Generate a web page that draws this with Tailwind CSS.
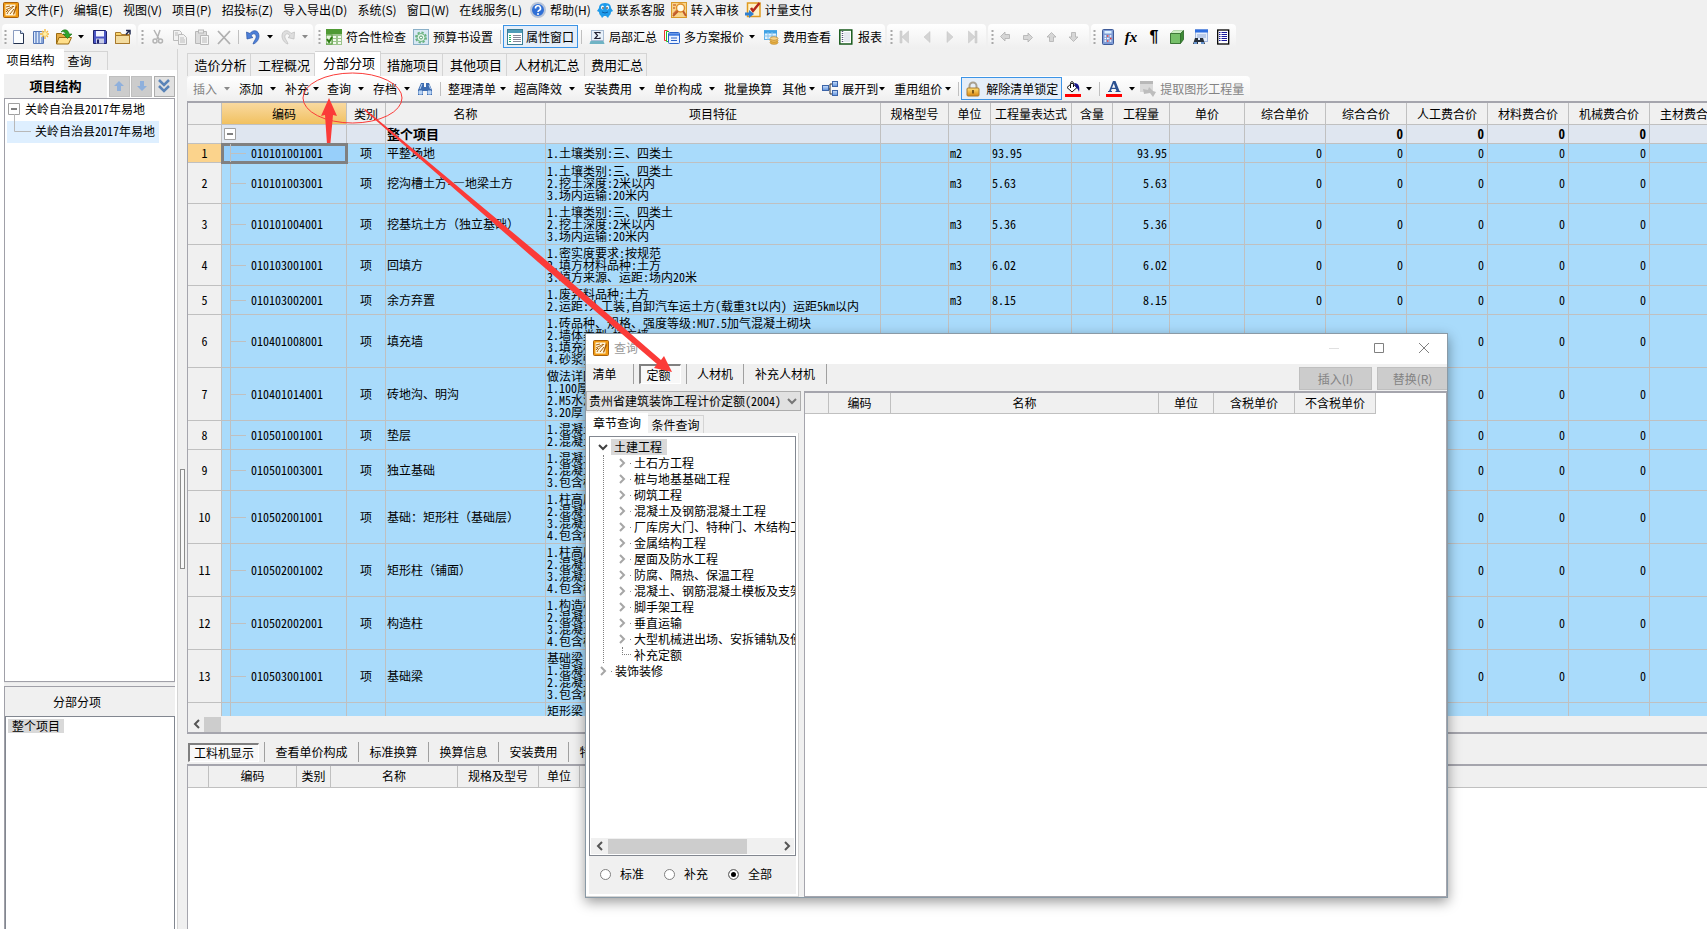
<!DOCTYPE html>
<html lang="zh-CN">
<head>
<meta charset="utf-8">
<title>计价软件 - 分部分项</title>
<script src="https://cdn.jsdelivr.net/npm/@tailwindcss/browser@4"></script>
</head>
<body class="relative h-screen overflow-hidden flex flex-col bg-[#f0f0f0] text-black text-[12px] leading-[16px] whitespace-nowrap font-['Noto_Sans_Mono_CJK_SC','Noto_Sans_CJK_SC',sans-serif]">

<svg class="absolute w-0 h-0" aria-hidden="true">
  <defs>
    <linearGradient id="gold" x1="0" y1="0" x2="0" y2="1"><stop offset="0" stop-color="#ffe27a"/><stop offset="1" stop-color="#d9840c"/></linearGradient>
    <linearGradient id="blu" x1="0" y1="0" x2="0" y2="1"><stop offset="0" stop-color="#cfe2fb"/><stop offset="1" stop-color="#5b8fdc"/></linearGradient>
    <symbol id="app" viewBox="0 0 16 16"><rect x=".5" y=".5" width="15" height="15" rx="1" fill="#f09a12" stroke="#a9600a"/><rect x="2.500" y="2.500" width="10" height="11" fill="#fff6dc"/><path d="M3 5l4-1M3 8c3-2 5-2 7-4M4 12c2-5 5-5 7-8M7 12l4-5M3 10l2-2" stroke="#a9600a" fill="none"/><path d="M13 3l-3 9 1 1 3-8z" fill="#a9600a"/></symbol>
    <symbol id="help" viewBox="0 0 16 16"><circle cx="8" cy="8" r="7" fill="#2f6fd6" stroke="#b8c4d8" stroke-width="2"/><path d="M5.500 6.500a2.500 2.500 0 1 1 3.500 2c-.8.4-1 .8-1 1.500" fill="none" stroke="#fff" stroke-width="1.600"/><circle cx="8" cy="12" r="1" fill="#fff"/></symbol>
    <symbol id="qq" viewBox="0 0 16 16"><path d="M8 1C3 1 2 4 2 6L0 9l2 1c0 2 1 3 2 4l1 2 2-2h2l2 2 1-2c1-1 2-2 2-4l2-1-2-3c0-2-1-5-6-5z" fill="#1f9bea"/><ellipse cx="5.500" cy="5.500" rx="1.500" ry="2" fill="#fff"/><ellipse cx="10.500" cy="5.500" rx="1.500" ry="2" fill="#fff"/><circle cx="6" cy="6" r=".8"/><circle cx="10" cy="6" r=".8"/><path d="M5 10q3 2 6 0" stroke="#0b5fa8" fill="none"/></symbol>
    <symbol id="audit" viewBox="0 0 16 16"><rect x=".5" y=".5" width="15" height="15" fill="#f9d488" stroke="#d99a2a"/><path d="M2 3h3M2 6h2M2 12l4-4" stroke="#d2733a" stroke-width="1.300"/><circle cx="9.500" cy="6" r="4" fill="#fffbe8" stroke="#e0902c" stroke-width="1.500"/><path d="M7 9l-5 5" stroke="#c05a2a" stroke-width="2"/><path d="M12 9l3 5" stroke="#c05a2a" stroke-width="2"/></symbol>
    <symbol id="pay" viewBox="0 0 16 16"><rect x="2.500" y="1" width="12.500" height="13.500" fill="#fff2c8" stroke="#e09a20" stroke-width="1.500"/><path d="M14.500 1L8 9 6 6" stroke="#b3281c" stroke-width="2.500" fill="none"/><path d="M0 10.500h4V8l5 4-5 4v-2.500H0z" fill="#2f7fd0"/></symbol>
    <symbol id="new" viewBox="0 0 16 16"><path d="M3.500 1.500h7l3 3v10h-10z" fill="#fbfdff" stroke="#8a9cc0"/><path d="M10.500 1.500v3h3" fill="#c5d6f0" stroke="#4a5a78"/><path d="M13.500 4.500v10h-10" stroke="#22304c" fill="none"/></symbol>
    <symbol id="newp" viewBox="0 0 16 16"><path d="M.5 2.500h10v12H.5z" fill="#dce9fb" stroke="#5577b8"/><path d="M3 3v11M6 3v11M9 8v6" stroke="#6f90cc" stroke-width="1.500"/><path d="M12 0v10M7 5h9M9 2l6 6M15 2L9 8" stroke="#f3b73a" stroke-width="1.300"/><circle cx="12" cy="5" r="2" fill="#fff0a8"/></symbol>
    <symbol id="open" viewBox="0 0 16 16"><path d="M.5 4.500h5l1 1h6v9H.5z" fill="#e5ab45" stroke="#9a6a10"/><path d="M3 8.500h12.500l-3 6.500H.5z" fill="#ffdf8a" stroke="#9a6a10"/><path d="M5 3c3-4 8-2 8 2h3l-4.500 4.500L7 5h3c-1-2-3-3-5-2z" fill="#2fa52c" stroke="#176b16" stroke-width=".6"/></symbol>
    <symbol id="save" viewBox="0 0 16 16"><path d="M1.500 1.500h12l1 1v12h-13z" fill="#4a55c4" stroke="#20246c"/><rect x="4" y="2" width="8" height="5.500" fill="#f3f5ff"/><rect x="4" y="9.500" width="8" height="5" fill="#c8cde8"/><rect x="5" y="10.500" width="2" height="4" fill="#20246c"/></symbol>
    <symbol id="folder" viewBox="0 0 16 16"><path d="M.5 3.500h5l1 2h8v9H.5z" fill="url(#gold)" stroke="#a8792c"/><path d="M.5 6.500h14v8H.5z" fill="#f3dca0" stroke="#a8792c"/><path d="M11 5.500l3.500-4M11 1.500h4v4" stroke="#222b50" stroke-width="1.500" fill="none"/></symbol>
    <symbol id="cut" viewBox="0 0 16 16" fill="none" stroke="#b4b4b4" stroke-width="1.500"><path d="M4 1l5 9M10 1L7 10"/><circle cx="5" cy="12" r="2"/><circle cx="10.500" cy="12" r="2"/></symbol>
    <symbol id="copy" viewBox="0 0 16 16" fill="#f2f2f2" stroke="#bcbcbc"><path d="M1.500 1.500h6l2 2v8h-8z"/><path d="M6.500 5.500h5l3 3v7h-8z"/><path d="M8 9h4M8 11h5M8 13h5M3 4h3M3 6h3"/></symbol>
    <symbol id="paste" viewBox="0 0 16 16" fill="#dcdcdc" stroke="#b8b8b8"><path d="M1.500 2.500h11v12h-11z"/><rect x="4.500" y="1" width="5" height="3" fill="#eee"/><path d="M6.500 6.500h8v9h-8z" fill="#f6f6f6"/><path d="M8 9h5M8 11h5M8 13h5"/></symbol>
    <symbol id="del" viewBox="0 0 16 16"><path d="M2 2l12 13M14 2L2 15" stroke="#b0b0b0" stroke-width="1.800"/></symbol>
    <symbol id="undo" viewBox="0 0 16 16"><path d="M1.500 3l.5 7 6-1.500-2-1.500c2-4 6-2 5 2-1 2-2 3-3 6 4-1 6-5 6-8 0-6-6-7-9-2.500z" fill="#4d7fd8" stroke="#2a56a8" stroke-width=".7"/></symbol>
    <symbol id="redo" viewBox="0 0 16 16"><path d="M14.500 3l-.5 7-6-1.500 2-1.500c-2-4-6-2-5 2 1 2 2 3 3 6-4-1-6-5-6-8 0-6 6-7 9-2.500z" fill="#dedede" stroke="#c0c0c0" stroke-width=".8"/></symbol>
    <symbol id="check" viewBox="0 0 16 16"><rect width="16" height="16" fill="#9cc48c"/><rect width="16" height="5" fill="#4f9a34"/><path d="M7 7h3v2H7zM12 7h3v2h-3zM7 10h3v2H7zM12 10h3v2h-3zM7 13h3v2H7zM12 13h3v2h-3z" fill="#f4faef"/><rect y="6" width="6" height="9" fill="#e6f4de" stroke="#4f9a34"/><path d="M1 10l2 3 3-5" stroke="#2d7a14" stroke-width="2" fill="none"/></symbol>
    <symbol id="gear" viewBox="0 0 16 16"><rect x=".5" y=".5" width="15" height="15" fill="#d8e8f4" stroke="#8ab0c8"/><circle cx="8" cy="8.500" r="5" fill="none" stroke="#69b380" stroke-width="2" stroke-dasharray="2.200 1.700"/><circle cx="8" cy="8.500" r="4" fill="#e5f5ea" stroke="#69b380"/><circle cx="8" cy="8.500" r="1.500" fill="#fff" stroke="#4c9a66"/></symbol>
    <symbol id="props" viewBox="0 0 16 16"><rect x=".5" y=".5" width="15" height="15" fill="#fff" stroke="#3a7d95"/><rect x="1" y="1" width="14" height="3" fill="#4f9db8"/><path d="M2 6.500h2M2 8.500h2M2 10.500h2M2 12.500h2" stroke="#2b6"/><path d="M6 6.500h8M6 8.500h8M6 10.500h8M6 12.500h8" stroke="#889"/></symbol>
    <symbol id="sum" viewBox="0 0 16 16"><rect x="2.500" y="1.500" width="12" height="10" fill="#e8f1fa" stroke="#a8bcd4"/><path d="M11 4.500V3.500H6l2.500 3L6 9.500h5v-1" fill="none" stroke="#223" stroke-width="1.200"/><path d="M1.500 12h13l1 3H.5z" fill="#6fb3c4"/></symbol>
    <symbol id="plans" viewBox="0 0 16 16"><path d="M3.500 1.500h-3v10h3" fill="#fff" stroke="#e33"/><path d="M5 2.500H2.500v10H5" fill="#fff" stroke="#2b2"/><rect x="4.500" y="3.500" width="11" height="11" rx="1" fill="#eaf2ff" stroke="#2b63c8"/><path d="M5 5.500h10" stroke="#3f7be0" stroke-width="2.500"/><path d="M7 9h6M7 11.500h6" stroke="#2b63c8"/></symbol>
    <symbol id="fee" viewBox="0 0 16 16"><rect x="1.500" y="1.500" width="12" height="9" fill="#e2f2fd" stroke="#62b0e6"/><path d="M1 3h13" stroke="#3fa2e6" stroke-width="3"/><path d="M1 7h13M5 3v8M9 3v8" stroke="#84c2ee"/><ellipse cx="11" cy="13.500" rx="4" ry="1.800" fill="#f0b745" stroke="#b8842a" stroke-width=".7"/><ellipse cx="11" cy="11.500" rx="4" ry="1.800" fill="#f4c05a" stroke="#b8842a" stroke-width=".7"/><ellipse cx="11" cy="9.500" rx="4" ry="1.800" fill="#f8d48a" stroke="#b8842a" stroke-width=".7"/></symbol>
    <symbol id="report" viewBox="0 0 16 16"><rect x="1.800" y="1" width="12" height="14" fill="#fff" stroke="#175a1b" stroke-width="1.500"/><path d="M4.500 2v12" stroke="#557" stroke-width="1.500" stroke-dasharray="1 1"/><path d="M6 4h6M6 6h6M6 8h6M6 10h6M6 12h6" stroke="#ccd4e0"/></symbol>
    <symbol id="first" viewBox="0 0 16 16" fill="#d4d4d4" stroke="#c2c2c2" stroke-width=".5"><path d="M4 2h2v12H4zM12.500 2v12L6 8z"/></symbol>
    <symbol id="prev" viewBox="0 0 16 16" fill="#d4d4d4" stroke="#c2c2c2" stroke-width=".5"><path d="M11 2.500v11L5 8z"/></symbol>
    <symbol id="next" viewBox="0 0 16 16" fill="#d4d4d4" stroke="#c2c2c2" stroke-width=".5"><path d="M5 2.500v11L11 8z"/></symbol>
    <symbol id="last" viewBox="0 0 16 16" fill="#d4d4d4" stroke="#c2c2c2" stroke-width=".5"><path d="M10 2h2v12h-2zM3.500 2v12L10 8z"/></symbol>
    <symbol id="al" viewBox="0 0 16 16"><path d="M3.500 7.500L8 3v2.500h4.500v4H8V12z" fill="#d6d6d6" stroke="#b0b0b0" stroke-width=".8"/></symbol>
    <symbol id="calc" viewBox="0 0 16 16"><rect x="2.500" y=".5" width="11" height="15" rx="1" fill="#7f9cd6" stroke="#3d5a98"/><rect x="4.500" y="2" width="7" height="2.500" fill="#dcf0ff"/><path d="M4.500 7h7M4.500 9.500h7M4.500 12h7" stroke="#fff" stroke-width="1.500" stroke-dasharray="1.600 1"/><path d="M7 7h1.500M10 9.500h1.500M7 12h1.500" stroke="#d33" stroke-width="1.500"/></symbol>
    <symbol id="cube" viewBox="0 0 16 16"><path d="M1.500 4.500l3-3h10v9l-3 4h-10z" fill="#3d8a34"/><path d="M1.500 4.500h10v10h-10z" fill="#76c069"/><path d="M1.500 4.500l3-3h10l-3 3z" fill="#cdeec4"/><path d="M1.500 4.500h10v10h-10zM11.500 4.500l3-3v9l-3 4" fill="none" stroke="#2a6424" stroke-width=".8"/></symbol>
    <symbol id="findw" viewBox="0 0 16 16"><rect x="3.500" y=".5" width="12" height="12" fill="#e5eefb" stroke="#a3b8e0"/><path d="M3 2h13" stroke="#2f6fe0" stroke-width="3"/><path d="M5 6h9M5 8h9" stroke="#8fa9d8"/><path d="M1 15l2-6h3v2h2V9h3l2 6H9v-2H6v2z" fill="#27303c"/><path d="M2 14h3M9 14h3" stroke="#7db5ff" stroke-width="1.500"/></symbol>
    <symbol id="list" viewBox="0 0 16 16"><rect x="2.700" y="1" width="11" height="14" fill="#fff" stroke="#000" stroke-width="1.300"/><path d="M4 3.500h1.500M4 5.500h1.500M4 7.500h1.500M4 9.500h1.500M4 11.500h1.500M6.500 3.500H12M6.500 5.500H12M6.500 7.500H12M6.500 9.500H12M6.500 11.500H12" stroke="#1a1a9c"/></symbol>
    <symbol id="bino" viewBox="0 0 16 16"><path d="M1 9l3-7h3v4h2V2h3l3 7v5h-5v-4H6v4H1z" fill="#3d6cb0"/><path d="M2 10h3v3H2zM11 10h3v3h-3zM5 3l-2 5M12 4l1.500 4" fill="#b9d4f5" stroke="#b9d4f5"/></symbol>
    <symbol id="nodes" viewBox="0 0 16 16"><path d="M5 8h3M8 3v10h3M8 3h3" stroke="#333" fill="none"/><rect x=".5" y="4.500" width="6" height="5" fill="url(#blu)" stroke="#3c64a8"/><rect x="10.500" y=".5" width="5" height="5" fill="url(#blu)" stroke="#3c64a8"/><rect x="10.500" y="9.500" width="5" height="5" fill="url(#blu)" stroke="#3c64a8"/></symbol>
    <symbol id="lock" viewBox="0 0 16 16"><path d="M4.500 8V5a3.500 3.500 0 0 1 7 0v3" fill="none" stroke="#a8a090" stroke-width="2"/><rect x="2" y="7" width="12" height="8" rx="1" fill="url(#gold)" stroke="#a87a30"/><path d="M8 9v3.500" stroke="#5a3a08" stroke-width="1.500"/></symbol>
    <symbol id="fill" viewBox="0 0 16 16"><path d="M2 6.500l5-4.500 5 4.500-5 4.500z" fill="#fff" stroke="#111"/><path d="M5.500 7V2.500C5.500 0 8.500 0 8.500 2.500V6" stroke="#111" fill="none"/><path d="M9 2c5 0 6 4 5 9-1-3-2-4-3-4.500z" fill="#15158a"/><rect y="13" width="16" height="3" fill="#f00"/></symbol>
    <symbol id="fontc" viewBox="0 0 16 16"><path d="M7 0h2.500l4 10h1v1H9.500v-1h1L9.700 8H5.600L5 10h1v1H2v-1h1zM7.800 2.500L6 6.800h3.300z" fill="#2b5090"/><rect y="13" width="16" height="3" fill="#f00"/></symbol>
    <symbol id="extract" viewBox="0 0 16 16"><rect width="13" height="11" fill="#dadada"/><rect width="13" height="3" fill="#b8b8b8"/><path d="M3 8l5 1 1-3 4 4 3 1-3 5-3-4-6 1z" fill="#bdbdbd"/></symbol>
    <symbol id="chev" viewBox="0 0 10 10"><path d="M3 1l4 4-4 4" fill="none" stroke="currentColor" stroke-width="2"/></symbol>
  </defs>
</svg>

<!-- menu bar -->
<nav class="h-6 pb-1 pl-[3px] flex items-center shrink-0">
  <svg class="size-4 mr-[6px]"><use href="#app"/></svg>
  <div id="menu" class="flex items-center gap-[10px]"></div>
  <div id="links" class="flex items-center gap-[6px] ml-2"></div>
</nav>

<!-- main toolbar -->
<div id="bar1" class="flex shrink-0 gap-[2px] pl-[2px] h-[25px]"></div>

<div class="flex flex-1 min-h-0">
  <!-- left column -->
  <aside class="w-[178px] shrink-0 flex flex-col border-r border-[#d4d4d4]">
    <div class="flex items-end h-[21px]">
      <button class="bg-white h-[21px] w-16 pr-[3px] text-center">项目结构</button>
      <button class="h-[19px] w-11 pr-3 border-t border-r border-[#d4d4d4]">查询</button>
    </div>
    <div class="bg-white flex-1 flex flex-col min-h-0 pl-1 pr-[2px] pt-1">
      <div class="flex items-center justify-between h-6 shrink-0 bg-white">
        <h2 class="bg-[#f0f0f0] w-[103px] h-6 leading-6 text-[13px] font-bold text-center">项目结构</h2>
        <button aria-label="上移" class="size-[21px] bg-[#cccccc] border border-[#bfbfbf] flex items-center justify-center"><svg class="w-3 h-3" viewBox="0 0 12 12"><path d="M6 1l5 5H8v5H4V6H1z" fill="#8fb0dc"/></svg></button>
        <button aria-label="下移" class="size-[21px] bg-[#cccccc] border border-[#bfbfbf] flex items-center justify-center"><svg class="w-3 h-3" viewBox="0 0 12 12"><path d="M6 11l5-5H8V1H4v5H1z" fill="#8fb0dc"/></svg></button>
        <button aria-label="展开" class="size-[21px] bg-[#e1e1e1] border border-[#adadad] flex items-center justify-center"><svg class="size-4" viewBox="0 0 16 16"><path d="M3 2l5 5 5-5M3 8l5 5 5-5" fill="none" stroke="#5a84b8" stroke-width="2.500"/></svg></button>
      </div>
      <div class="flex-1 border border-[#a0a0a8] pl-[2px]">
        <div class="flex items-center h-[20px] pl-[1px]"><svg class="size-3 mr-[5px]" viewBox="0 0 12 12"><path d="M.5 .5h11v11H.5z" fill="#fff" stroke="#a0a0a0"/><path d="M3 6h6" stroke="#000"/></svg>关岭自治县2017年易地</div>
        <div class="flex items-center h-[22px] mt-[2px] pb-[2px] w-[152px] bg-[#deefff]"><svg class="w-[28px] h-[22px] overflow-visible" viewBox="0 0 28 22"><path d="M7.500 -6V11.500H24" fill="none" stroke="#b8b8b8"/></svg>关岭自治县2017年易地</div>
      </div>
      <div class="h-1 shrink-0 bg-[#f0f0f0] border-t border-[#e8e8e8]"></div>
      <div class="h-[243px] shrink-0 border-l border-t border-[#a0a0a8] bg-[#f0f0f0] flex flex-col">
        <h2 class="h-[29px] leading-[30px] pl-12 font-normal">分部分项</h2>
        <div class="bg-white flex-1 border-x border-t border-[#828790] pt-[1px] pl-[2px]"><span class="inline-block bg-[#d9d9d9] h-[14px] leading-[14px] px-1">整个项目</span></div>
      </div>
    </div>
  </aside>
  <div class="w-2 shrink-0 flex items-center pl-[2px]"><div class="w-[5px] h-[100px] mt-[60px] border border-[#8c8c8c] bg-[#f8f8f8]"></div></div>

  <!-- right column -->
  <main class="flex-1 min-w-0 flex flex-col pt-[2px] pl-[1px]">
    <div id="tabs" class="flex items-end h-[25px] shrink-0 text-[13px]"></div>
    <div id="bar2" class="flex items-center h-[25px] w-[1063px] shrink-0 pl-[6px] rounded bg-linear-to-b from-white to-[#efefef]"></div>
    <section class="h-[633px] shrink-0 border-l border-t-2 border-b-2 border-[#a5a5ad] flex flex-col">
      <div class="h-[613px] overflow-hidden bg-white">
        <table class="table-fixed border-separate border-spacing-0 w-[1543px]">
          <colgroup><col class="w-[34px]"><col class="w-[125px]"><col class="w-[39px]"><col class="w-[160px]"><col class="w-[335px]"><col class="w-[68px]"><col class="w-[42px]"><col class="w-[81px]"><col class="w-[41px]"><col class="w-[57px]"><col class="w-[75px]"><col class="w-[81px]"><col class="w-[81px]"><col class="w-[81px]"><col class="w-[81px]"><col class="w-[81px]"><col class="w-[81px]"></colgroup>
          <thead><tr id="head" class="h-[22px]"></tr></thead>
          <tbody id="rows"></tbody>
        </table>
      </div>
      <div class="h-4 flex items-center bg-[#f0f0f0] pl-1">
        <svg class="size-[10px] mr-[2px] text-[#555] rotate-180"><use href="#chev"/></svg>
        <div class="w-[17px] h-[15px] bg-[#cdcdcd]"></div>
      </div>
    </section>
    <div class="flex items-center h-[30px] shrink-0 pt-[6px] pl-[1px]">
      <button class="h-[19px] w-[71px] border-t-2 border-l-2 border-r border-b border-t-[#808080] border-l-[#808080] border-[#fff] bg-[#f8f8f8]">工料机显示</button>
      <div id="subtabs" class="flex ml-[5px]"></div>
    </div>
    <section class="flex-1 bg-white border-l border-t-2 border-[#a5a5ad]">
      <div id="subhead" class="flex h-[22px] bg-[#f0f0f0] border-b border-[#c0c0c0] text-center leading-[20px]"></div>
    </section>
  </main>
</div>

<!-- query dialog -->
<section role="dialog" aria-label="查询" class="absolute left-[585px] top-[333px] w-[863px] h-[565px] bg-[#f0f0f0] border border-[#8a9aa6] shadow-[0_4px_12px_rgba(0,0,0,0.4)] flex flex-col">
  <header class="h-[30px] shrink-0 bg-white flex items-center pl-[7px] pr-[17px] pb-[2px] text-[#999]">
    <svg class="size-4 mr-[5px]"><use href="#app"/></svg>查询
    <div class="ml-auto flex gap-[33px]">
      <button aria-label="最小化"><svg class="size-3" viewBox="0 0 12 12"><path d="M1 6.500h10" stroke="#e0e0e0"/></svg></button>
      <button aria-label="最大化"><svg class="size-3" viewBox="0 0 12 12"><path d="M1.500 1.500h9v9h-9z" fill="none" stroke="#808080"/></svg></button>
      <button aria-label="关闭"><svg class="size-3" viewBox="0 0 12 12"><path d="M1 1l10 10M11 1L1 11" stroke="#808080"/></svg></button>
    </div>
  </header>
  <div class="h-[27px] shrink-0 flex">
    <div class="flex h-5 text-center">
      <button class="w-12 pr-[14px] pl-[4px] border-r border-[#a0a0a0]">清单</button>
      <button class="w-[42px] h-5 mx-[5px] pr-[4px] border-t-2 border-l-2 border-r border-b border-t-[#808080] border-l-[#808080] border-white bg-[#f8f8f8]">定额</button>
      <button class="w-[58px] border-x border-[#a0a0a0]">人材机</button>
      <button class="w-[83px] border-r border-[#a0a0a0]">补充人材机</button>
    </div>
    <div class="ml-auto flex gap-[5px] pt-[3px] text-[#838383]">
      <button class="w-[73px] h-[23px] bg-[#cccccc] border border-[#bfbfbf] font-['Noto_Sans_CJK_SC',sans-serif]">插入(I)</button>
      <button class="w-[70px] h-[23px] bg-[#cccccc] border border-r-0 border-[#bfbfbf] font-['Noto_Sans_CJK_SC',sans-serif]">替换(R)</button>
    </div>
  </div>
  <div class="flex flex-1 min-h-0">
    <div class="w-[215px] shrink-0 flex flex-col">
      <div class="relative h-5 shrink-0">
        <select aria-label="定额库" class="appearance-none w-full h-5 pl-[2px] bg-[#e1e1e1] border border-[#adadad] rounded-none leading-[16px]"><option>贵州省建筑装饰工程计价定额(2004)</option></select>
        <svg class="size-[10px] absolute right-1 top-[5px] text-[#777] rotate-90 pointer-events-none"><use href="#chev"/></svg>
      </div>
      <div class="flex items-end h-[22px] shrink-0">
        <button class="bg-white h-5 w-[62px]">章节查询</button>
        <button class="w-14 h-[18px] border-t border-r border-[#d4d4d4]">条件查询</button>
      </div>
      <div class="flex-1 min-h-0 bg-white border-r border-b border-[#d4d4d4] w-[213px] pl-[3px] pr-[2px] pt-[3px] pb-[2px] flex flex-col">
        <div class="flex-1 min-h-0 border border-[#828790] flex flex-col overflow-hidden">
          <ul id="tree" class="flex-1 pt-[2px] overflow-hidden"></ul>
          <div class="h-4 shrink-0 mx-[1px] mb-[1px] pl-1 pr-[2px] bg-[#f0f0f0] flex items-center">
            <svg class="size-[10px] text-[#555] rotate-180 mr-[3px]"><use href="#chev"/></svg>
            <div class="w-[139px] h-[15px] bg-[#cdcdcd]"></div>
            <svg class="size-[10px] text-[#555] ml-auto"><use href="#chev"/></svg>
          </div>
        </div>
        <div class="h-[38px] shrink-0 bg-[#f0f0f0] flex items-center pl-[11px] pb-[2px] gap-5">
          <label class="flex items-center gap-[9px]"><input type="radio" name="scope" class="appearance-none size-[11px] rounded-full border border-[#808080] bg-white">标准</label>
          <label class="flex items-center gap-[9px]"><input type="radio" name="scope" class="appearance-none size-[11px] rounded-full border border-[#808080] bg-white">补充</label>
          <label class="flex items-center gap-[9px]"><input type="radio" name="scope" checked class="appearance-none size-[11px] rounded-full border border-[#808080] bg-white checked:bg-black checked:shadow-[inset_0_0_0_2px_#fff]">全部</label>
        </div>
      </div>
    </div>
    <div class="flex-1 ml-[3px] bg-white border-l border-t-2 border-b border-r border-[#a5a5ad]">
      <div id="dhead" class="flex h-[21px] text-center leading-[20px]"></div>
    </div>
  </div>
</section>

<!-- red callouts -->
<svg class="absolute inset-0 w-full h-full pointer-events-none" aria-hidden="true">
  <ellipse cx="352.500" cy="98" rx="49.500" ry="25" fill="none" stroke="#fb3b38"/>
  <path d="M329 98l8 18-4-1-4 44h-1l-3-44-4 1z" fill="#fb3b38"/>
  <path d="M365 109L541 256 661 360l3-4 8 16-18-4 3-4L538 262 364 110z" fill="#fb3b38"/>
</svg>

<script>
const $ = id => document.getElementById(id);
const icon = (n, c = '') => `<svg class="size-4 shrink-0 ${c}"><use href="#${n}"/></svg>`;
const arrow = (dim) => `<svg class="w-2 h-1 shrink-0" viewBox="0 0 8 4"><path d="M1 0h6L4 3.500z" fill="${dim ? '#8a8a8a' : '#000'}"/></svg>`;
const grip = '<svg class="w-[3px] h-4 shrink-0" viewBox="0 0 3 16"><path d="M1.500 1v15" stroke="#a8a8a8" stroke-width="2" stroke-dasharray="2 2"/></svg>';
const sep = '<span class="w-px h-[14px] bg-[#c0c0c0] shrink-0"></span>';

$('menu').innerHTML = ['文件(F)','编辑(E)','视图(V)','项目(P)','招投标(Z)','导入导出(D)','系统(S)','窗口(W)','在线服务(L)']
  .map(t => `<button class="font-['Noto_Sans_CJK_SC',sans-serif]">${t}</button>`).join('');
$('links').innerHTML = [['help','帮助(H)'],['qq','联系客服'],['audit','转入审核'],['pay','计量支付']]
  .map(([i,t]) => `<button class="flex items-center gap-1 font-['Noto_Sans_CJK_SC',sans-serif]">${icon(i)}${t}</button>`).join('');

const ib = (n, label) => `<button aria-label="${label}">${icon(n)}</button>`;
const tb = (n, t, a) => `<button class="flex items-center gap-1">${icon(n)}${t}${a ? arrow() : ''}</button>`;
const dd = (n, label, dim) => `<button aria-label="${label}" class="flex items-center gap-[5px]">${icon(n)}${arrow(dim)}</button>`;
const seg = (cls, inner) => `<div class="flex items-center h-[25px] rounded bg-linear-to-b from-white to-[#efefef] ${cls}">${inner}</div>`;
$('bar1').innerHTML =
  seg('w-[134px] pl-[2px]', grip + '<div class="flex items-center gap-[7px] ml-[3px]">' + ib('new','新建') + ib('newp','新建项目') + dd('open','打开') + ib('save','保存') + ib('folder','另存') + '</div>') +
  seg('w-[175px] pl-[3px]', grip + '<div class="flex items-center gap-[6px] ml-[6px]">' + ib('cut','剪切') + ib('copy','复制') + ib('paste','粘贴') + ib('del','删除') + sep + dd('undo','撤销') + dd('redo','重做', true) + '</div>') +
  seg('w-[570px] pl-[3px]', grip + '<div class="flex items-center gap-[7px] ml-[5px]">' + tb('check','符合性检查') + tb('gear','预算书设置') + sep +
    `<button class="flex items-center gap-[3px] h-[23px] px-[3px] -ml-[5px] -mr-[6px] border border-[#3c94e6] bg-[#e5eef9]">${icon('props')}属性窗口</button>` + '<span class="w-px h-[14px] bg-[#c0c0c0] ml-[2px]"></span>' +
    tb('sum','局部汇总') + tb('plans','多方案报价', true) + tb('fee','费用查看') + tb('report','报表') + '</div>') +
  seg('w-[99px] pl-[3px]', grip + '<div class="flex items-center gap-[7px] ml-[3px]">' + ib('first','首行') + ib('prev','上一行') + ib('next','下一行') + ib('last','末行') + '</div>') +
  seg('w-[101px] pl-[3px]', grip + '<div class="flex items-center gap-[7px] ml-[3px]">' +
    `<button aria-label="左移">${icon('al')}</button><button aria-label="右移">${icon('al','rotate-180')}</button><button aria-label="升级">${icon('al','rotate-90')}</button><button aria-label="降级">${icon('al','-rotate-90')}</button></div>`) +
  seg('w-[145px] pl-[2px]', grip + '<div class="flex items-center gap-[7px] ml-[4px]">' + ib('calc','计算器') +
    `<button class="w-4 font-['Liberation_Serif',serif] italic font-bold text-[15px]">fx</button><button class="w-4 font-['Liberation_Sans',sans-serif] font-bold text-[16px]">¶</button>` + ib('cube','三维') + ib('findw','查找') + ib('list','列表') + '</div>');

$('tabs').innerHTML = [['造价分析','w-[64px] h-[23px] border-l'],['工程概况','w-[64px] h-[23px]'],['分部分项','w-[66px] h-[25px] bg-white pb-[2px]'],['措施项目','w-[62px] h-[23px]'],['其他项目','w-[64px] h-[23px]'],['人材机汇总','w-[78px] h-[23px]'],['费用汇总','w-[62px] h-[23px]']]
  .map(([t,c]) => `<button class="border-t border-r border-[#d4d4d4] pl-[3px] pb-[1px] ${c}">${t}</button>`).join('');

const t2 = (t, g, m, dim) => `<button class="flex items-center ${g} ${m} ${dim ? 'text-[#838383]' : ''}">${t}${arrow(dim)}</button>`;
$('bar2').innerHTML =
  t2('插入','gap-[6px]','mr-2',true) + t2('添加','gap-[6px]','mr-2') + t2('补充','gap-[3px]','mr-[7px]') + t2('查询','gap-[6px]','mr-2') + t2('存档','gap-[6px]','mr-[6px]') +
  `<button aria-label="查找" class="mr-[7px]">${icon('bino')}</button>` + sep +
  t2('整理清单','gap-[3px]','ml-[7px] mr-[7px]') + t2('超高降效','gap-[6px]','mr-2') + t2('安装费用','gap-[6px]','mr-2') + t2('单价构成','gap-[6px]','mr-2') +
  '<button class="mr-[10px]">批量换算</button>' + t2('其他','gap-[2px]','mr-[6px]') +
  `<button class="flex items-center mr-[8px]">${icon('nodes','mr-1')}展开到${arrow()}</button>` + t2('重用组价','gap-[2px]','mr-[6px]') + sep +
  `<button class="flex items-center gap-[5px] h-[23px] ml-[2px] px-[3px] border border-[#3c94e6] bg-[#e5eef9]">${icon('lock')}解除清单锁定</button>` +
  `<button aria-label="填充色" class="flex items-center gap-1 ml-[3px] mr-[6px]">${icon('fill')}${arrow()}</button>` + sep +
  `<button aria-label="字体色" class="flex items-center gap-[6px] ml-[6px] mr-[4px]">${icon('fontc')}${arrow()}</button>` +
  `<button class="flex items-center gap-1 text-[#838383]">${icon('extract')}提取图形工程量</button>`;

const heads = ['','编码','类别','名称','项目特征','规格型号','单位','工程量表达式','含量','工程量','单价','综合单价','综合合价','人工费合价','材料费合价','机械费合价','主材费合价'];
$('head').innerHTML = heads.map((h, i) => `<th class="font-normal p-0 border-r border-b border-[#c0c0c0] text-center ${i === 1 ? 'bg-linear-to-b from-[#f9d99f] to-[#f1c15f]' : 'bg-[#f0f0f0]'}">${h}</th>`).join('');

const data = [
  ['h-[19px]','010101001001','平整场地',['1.土壤类别:三、四类土'],'m2','93.95'],
  ['h-[41px]','010101003001','挖沟槽土方-—地梁土方',['1.土壤类别:三、四类土','2.挖土深度:2米以内','3.场内运输:20米内'],'m3','5.63'],
  ['h-[41px]','010101004001','挖基坑土方（独立基础）',['1.土壤类别:三、四类土','2.挖土深度:2米以内','3.场内运输:20米内'],'m3','5.36'],
  ['h-[41px]','010103001001','回填方',['1.密实度要求:按规范','2.填方材料品种:土方','3.填方来源、运距:场内20米'],'m3','6.02'],
  ['h-[29px]','010103002001','余方弃置',['1.废弃料品种:土方','2.运距:人工装,自卸汽车运土方(载重3t以内) 运距5km以内'],'m3','8.15'],
  ['h-[53px]','010401008001','填充墙',['1.砖品种、规格、强度等级:MU7.5加气混凝土砌块','2.墙体类型:填充墙','3.填充材料','4.砂浆强度'],'',''],
  ['h-[53px]','010401014001','砖地沟、明沟',['做法详图','1.100厚','2.M5水泥','3.20厚'],'',''],
  ['h-[29px]','010501001001','垫层',['1.混凝土','2.混凝土'],'',''],
  ['h-[41px]','010501003001','独立基础',['1.混凝土','2.混凝土','3.包含模板'],'',''],
  ['h-[53px]','010502001001','基础：矩形柱（基础层）',['1.柱高度','2.混凝土','3.混凝土','4.包含模板'],'',''],
  ['h-[53px]','010502001002','矩形柱（铺面）',['1.柱高度','2.混凝土','3.混凝土','4.包含模板'],'',''],
  ['h-[53px]','010502002001','构造柱',['1.构造柱','2.混凝土','3.混凝土','4.包含模板'],'',''],
  ['h-[53px]','010503001001','基础梁',['基础梁','1.混凝土','2.混凝土','3.包含模板'],'',''],
  ['h-[53px]','','',['矩形梁','1.混凝土','2.混凝土','3.包含模板'],'',''],
];
const cell = 'p-0 border-r border-b border-[#c0c0c0]';
let out = `<tr class="h-[19px] bg-[#dfe6f0] font-bold text-[13px]"><td class="${cell} bg-[#f0f0f0]"></td><td class="${cell} pl-[2px]"><svg class="size-3" viewBox="0 0 12 12"><path d="M.5 .5h11v11H.5z" fill="#fff" stroke="#a0a0a0"/><path d="M3 6h6" stroke="#000"/></svg></td><td class="${cell}"></td><td class="${cell} pl-[1px]">整个项目</td>`;
for (let i = 4; i < 17; i++) out += `<td class="${cell} pr-[3px] text-right">${i >= 12 && i < 16 ? '0' : ''}</td>`;
out += '</tr>';
data.forEach(([h, code, name, feat, unit, qty], n) => {
  const last = !code, sel = n === 0;
  out += `<tr class="${h} bg-[#a9dbfb]"><td class="${cell} text-center ${sel ? 'bg-[#fbd38c]' : 'bg-[#f0f0f0]'}">${last ? '' : n + 1}</td>` +
    `<td class="${cell} relative pl-[29px] before:absolute before:left-2 before:top-0 before:bottom-0 before:w-px before:bg-[#c0c0c0] ${last ? '' : 'after:absolute after:left-2 after:top-1/2 after:w-4 after:h-px after:bg-[#c0c0c0]'} ${sel ? 'bg-[#97cffa] outline-3 -outline-offset-2 outline-[#808080] z-10' : ''}">${code}</td>` +
    `<td class="${cell} text-center">${last ? '' : '项'}</td><td class="${cell} pl-[1px]">${name}</td>` +
    `<td class="${cell} pl-[1px] leading-[12px] whitespace-pre overflow-hidden">${feat.join('\n')}</td><td class="${cell}"></td>` +
    `<td class="${cell} pl-[1px]">${unit}</td><td class="${cell} pl-[1px]">${qty}</td><td class="${cell}"></td><td class="${cell} pr-[2px] text-right">${qty}</td><td class="${cell}"></td>`;
  for (let i = 11; i < 17; i++) out += `<td class="${cell} pr-[3px] text-right">${i < 16 && !last ? '0' : ''}</td>`;
  out += '</tr>';
});
$('rows').innerHTML = out;

$('subtabs').innerHTML = [['查看单价构成','w-[94px]'],['标准换算','w-[70px]'],['换算信息','w-[70px]'],['安装费用','w-[70px]'],['特征及内容','w-[82px]']]
  .map(([t,c]) => `<button class="h-5 border-l border-[#a0a0a0] ${c}">${t}</button>`).join('');
$('subhead').innerHTML = [['','w-[21px]'],['编码','w-[88px]'],['类别','w-[34px]'],['名称','w-[127px]'],['规格及型号','w-[81px]'],['单位','w-[41px]'],['含量','w-[60px]']]
  .map(([t,c]) => `<div class="border-r border-[#c0c0c0] ${c}">${t}</div>`).join('');
$('dhead').innerHTML = [['','w-[24px]'],['编码','w-[62px]'],['名称','w-[268px]'],['单位','w-[55px]'],['含税单价','w-[81px]'],['不含税单价','w-[81px]']]
  .map(([t,c]) => `<div class="bg-[#f0f0f0] border-r border-b border-[#c0c0c0] ${c}">${t}</div>`).join('');

const kids = ['土石方工程','桩与地基基础工程','砌筑工程','混凝土及钢筋混凝土工程','厂库房大门、特种门、木结构工程','金属结构工程','屋面及防水工程','防腐、隔热、保温工程','混凝土、钢筋混凝土模板及支架','脚手架工程','垂直运输','大型机械进出场、安拆铺轨及使用'];
const chev = c => `<svg class="size-[10px] shrink-0 ${c}"><use href="#chev"/></svg>`;
const dot = '<span class="w-px h-px bg-[#808080] mx-[3px] shrink-0"></span>';
$('tree').innerHTML =
  `<li class="flex items-center h-4 pl-2">${chev('rotate-90 text-[#404040]')}<span class="bg-[#d9d9d9] h-4 leading-[16px] ml-[3px] pl-[3px] pr-[5px]">土建工程</span></li>` +
  `<li><ul class="ml-[13px] border-l border-dotted border-[#808080]">` +
  kids.map(k => `<li class="flex items-center h-4 pl-[13px]">${chev('text-[#a6a6a6]')}${dot}<span>${k}</span></li>`).join('') +
  `<li class="flex items-center h-4 pl-[18px]"><span class="w-[9px] h-2 -mt-2 mr-[3px] border-l border-b border-dotted border-[#808080]"></span>补充定额</li></ul></li>` +
  `<li class="flex items-center h-4 pl-2">${chev('text-[#a6a6a6]')}${dot}<span>装饰装修</span></li>`;
</script>
</body>
</html>
